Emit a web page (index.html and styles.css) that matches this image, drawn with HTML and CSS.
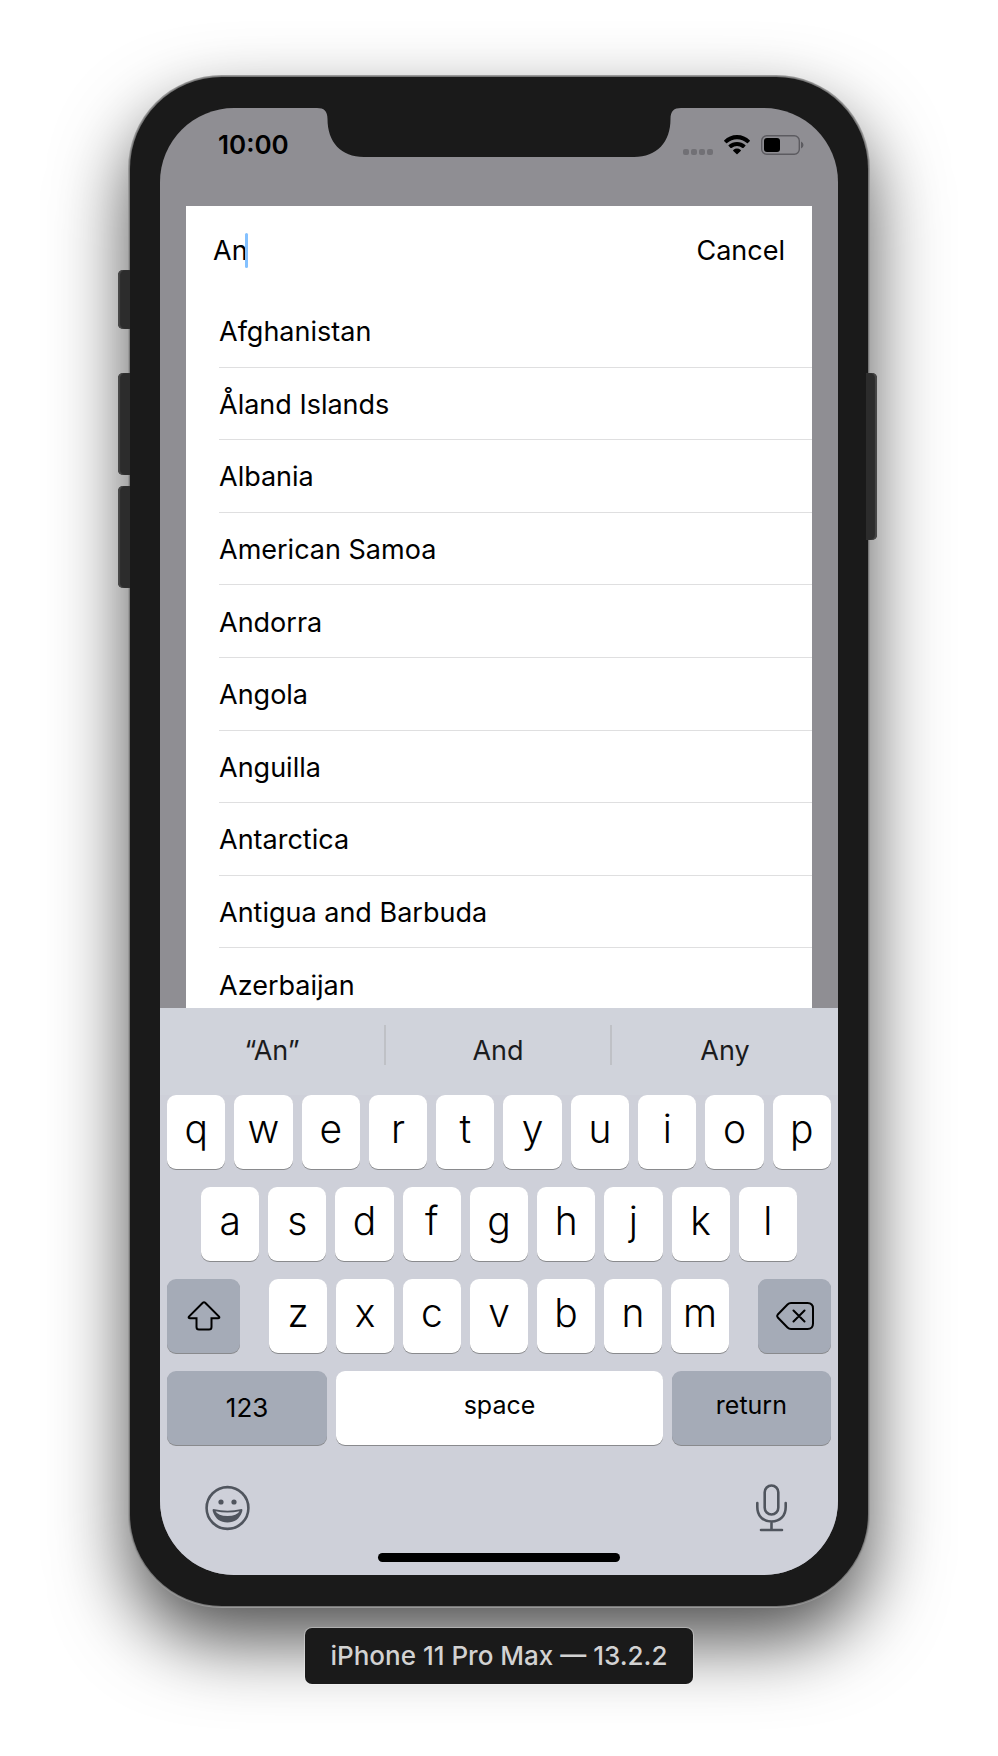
FILE: index.html
```html
<!DOCTYPE html>
<html lang="en">
<head>
<meta charset="utf-8">
<meta name="viewport" content="width=device-width, initial-scale=1">
<title>Country search</title>
<link rel="stylesheet" href="styles.css">
</head>
<body>
<main class="stage">
  <div class="phone">
    <span class="side mute"></span>
    <span class="side volume-up"></span>
    <span class="side volume-down"></span>
    <span class="side power"></span>
    <div class="screen">
      <svg class="notch" viewBox="0 0 364 49" aria-hidden="true"><path d="M0 0C7 0 10.500 3 10.500 11C10.500 34 24 49 47 49H317C340 49 353.500 34 353.500 11C353.500 3 357 0 364 0Z" fill="#1a1a1a"/></svg>
      <header class="status">
        <time class="clock">10:00</time>
        <div class="indicators">
          <svg width="30" height="20" viewBox="0 0 30 20" aria-hidden="true"><g fill="#717075"><rect y="14" width="6" height="6" rx="2"/><rect x="8" y="14" width="6" height="6" rx="2"/><rect x="16" y="14" width="6" height="6" rx="2"/><rect x="24" y="14" width="6" height="6" rx="2"/></g></svg>
          <svg width="26" height="20" viewBox="0 0 26 20" aria-hidden="true"><path d="M13 0C18 0 22.500 2 25.700 5.200Q26.200 5.700 25.700 6.200L23.900 8Q23.400 8.500 22.900 8Q18.700 4.200 13 4.200T3.100 8Q2.600 8.500 2.100 8L.3 6.200Q-.2 5.700.3 5.200C3.500 2 8 0 13 0ZM13 6.900Q17.800 6.900 21.300 10.100Q21.800 10.600 21.300 11.100L19.400 12.900Q18.900 13.300 18.400 12.900Q16 11 13 11T7.600 12.900Q7.100 13.300 6.600 12.900L4.700 11.100Q4.200 10.600 4.700 10.100Q8.200 6.900 13 6.900ZM13 13.500Q15 13.500 16.700 14.900Q17.200 15.400 16.700 15.900L13.500 19.100Q13 19.600 12.500 19.100L9.300 15.900Q8.800 15.400 9.300 14.900Q11 13.500 13 13.500Z"/></svg>
          <svg width="43" height="20" viewBox="0 0 43 20" aria-hidden="true"><rect x=".7" y=".7" width="37.600" height="18.600" rx="5" fill="none" stroke="#5c5b60" stroke-width="1.400"/><rect x="3" y="3" width="16" height="14" rx="3"/><path d="M40 6.500Q42.500 7.500 42.500 10T40 13.500Z" fill="#5c5b60"/></svg>
        </div>
      </header>
      <section class="sheet">
        <form class="search">
          <label class="field"><input class="query" type="text" value="An" size="2" aria-label="Search countries"><span class="caret"></span></label>
          <button class="cancel" type="button">Cancel</button>
        </form>
        <ul class="countries">
          <li>Afghanistan</li>
          <li>Åland Islands</li>
          <li>Albania</li>
          <li>American Samoa</li>
          <li>Andorra</li>
          <li>Angola</li>
          <li>Anguilla</li>
          <li>Antarctica</li>
          <li>Antigua and Barbuda</li>
          <li>Azerbaijan</li>
        </ul>
      </section>
      <section class="keyboard" aria-label="Keyboard">
        <div class="suggestions">
          <button type="button">“An”</button>
          <button type="button">And</button>
          <button type="button">Any</button>
        </div>
        <div class="keys">
          <div class="row">
            <button class="key" type="button">q</button><button class="key" type="button">w</button><button class="key" type="button">e</button><button class="key" type="button">r</button><button class="key" type="button">t</button><button class="key" type="button">y</button><button class="key" type="button">u</button><button class="key" type="button">i</button><button class="key" type="button">o</button><button class="key" type="button">p</button>
          </div>
          <div class="row inset">
            <button class="key" type="button">a</button><button class="key" type="button">s</button><button class="key" type="button">d</button><button class="key" type="button">f</button><button class="key" type="button">g</button><button class="key" type="button">h</button><button class="key" type="button">j</button><button class="key" type="button">k</button><button class="key" type="button">l</button>
          </div>
          <div class="row wide-gap">
            <button class="key dark edge" type="button" aria-label="Shift"><svg width="34" height="30" viewBox="0 0 34 30" aria-hidden="true"><path d="M15.800 1.800Q17 .7 18.200 1.800L32 15.500Q33 17.300 31 17.300H24.500V26Q24.500 28.500 22 28.500H12Q9.500 28.500 9.500 26V17.300H3Q1 17.300 2 15.500Z"/></svg></button>
            <div class="row letters">
              <button class="key" type="button">z</button><button class="key" type="button">x</button><button class="key" type="button">c</button><button class="key" type="button">v</button><button class="key" type="button">b</button><button class="key" type="button">n</button><button class="key" type="button">m</button>
            </div>
            <button class="key dark edge" type="button" aria-label="Delete"><svg width="38" height="28" viewBox="0 0 38 28" aria-hidden="true"><path d="M15 1H31.500Q37 1 37 6.500V21.500Q37 27 31.500 27H15Q13 27 11.500 25.500L1.800 15.500Q.6 14 1.800 12.500L11.500 2.500Q13 1 15 1ZM17.500 8.500L28.500 19.500M28.500 8.500L17.500 19.500"/></svg></button>
          </div>
          <div class="row bottom">
            <button class="key dark word number" type="button">123</button>
            <button class="key word" type="button">space</button>
            <button class="key dark word" type="button">return</button>
          </div>
        </div>
        <div class="tools">
          <button type="button" aria-label="Emoji"><svg width="45" height="46" viewBox="0 0 45 46" aria-hidden="true"><circle cx="22.500" cy="23" r="20.900" fill="none" stroke="#50555e" stroke-width="2.600"/><circle cx="16" cy="17" r="2.600"/><circle cx="29" cy="17" r="2.600"/><path d="M8.500 24Q22.500 27.500 36.500 24Q38 24 37 27C34.500 34 29.500 37.500 22.500 37.500S10.500 34 8 27Q7 24 8.500 24ZM10.500 26.200Q13 31 22.500 31T34.500 26.200Q22.500 29 10.500 26.200Z" fill-rule="evenodd"/></svg></button>
          <button type="button" aria-label="Dictate"><svg width="31" height="48" viewBox="0 0 31 48" aria-hidden="true"><g fill="none" stroke="#50555e" stroke-width="2.600" stroke-linecap="round"><rect x="8.700" y="1.500" width="13.600" height="29" rx="6.800"/><path d="M1.300 19V23C1.300 31.500 6.500 37.500 15.500 37.500S29.700 31.500 29.700 23V19M15.500 37.500V46M5 46H26"/></g></svg></button>
        </div>
        <div class="home"></div>
      </section>
    </div>
  </div>
  <p class="device">iPhone 11 Pro Max — 13.2.2</p>
</main>
</body>
</html>
```
FILE: styles.css
```css
* {
  box-sizing: border-box;
}

body {
  margin: 0;
  background: #fff;
  color: #000;
  font-family: Inter, "Liberation Sans", sans-serif;
}

button {
  border: 0;
  padding: 0;
  background: none;
  color: inherit;
  font: inherit;
}

.stage {
  display: flex;
  flex-direction: column;
  align-items: center;
  min-height: 100vh;
  padding: 77px 16px 72px;
  overflow: hidden;
}

.phone {
  position: relative;
  width: 100%;
  max-width: 738px;
  padding: 31px 30px;
  border-radius: 92px;
  background: #1a1a1a;
  box-shadow: 0 0 0 1px #777, 0 0 0 2px #999, 0 34px 76px rgba(0, 0, 0, 0.7);
}

.side {
  position: absolute;
  left: -12px;
  width: 12px;
  border-radius: 5px 0 0 5px;
  background: #2c2c2c;
  box-shadow: inset 2px 0 1px #484848;
}

.mute {
  top: 193px;
  height: 59px;
}

.volume-up {
  top: 296px;
  height: 102px;
}

.volume-down {
  top: 409px;
  height: 102px;
}

.power {
  top: 296px;
  right: -9px;
  left: auto;
  width: 11px;
  height: 167px;
  border-radius: 0 5px 5px 0;
  box-shadow: inset -2px 0 1px #484848;
}

.screen {
  position: relative;
  display: flex;
  flex-direction: column;
  border-radius: 74px;
  background: #8f8e93;
  overflow: hidden;
}

.notch {
  position: absolute;
  top: 0;
  left: 50%;
  width: 364px;
  transform: translateX(-50%);
}

.status {
  display: flex;
  justify-content: space-between;
  align-items: center;
  padding: 20px 34px 44px 58px;
}

.clock {
  font-size: 26px;
  font-weight: 600;
  line-height: 34px;
}

.indicators {
  display: flex;
  align-items: center;
  gap: 11px;
}

.sheet {
  height: 802px;
  margin: 0 26px;
  background: #fff;
  overflow: hidden;
}

.search {
  display: flex;
  justify-content: space-between;
  align-items: center;
  height: 89px;
  padding: 0 27px;
  font-size: 27px;
}

.field {
  display: flex;
  align-items: center;
}

.query {
  field-sizing: content;
  margin-right: -3px;
  padding: 0;
  border: 0;
  outline: 0;
  background: none;
  color: inherit;
  font: inherit;
}

.caret {
  width: 3px;
  height: 35px;
  border-radius: 2px;
  background: #84c1ff;
}

.countries {
  display: grid;
  grid-template-rows: repeat(10, 1fr);
  height: 726px;
  margin: 0;
  padding: 0 0 0 33px;
  list-style: none;
  font-size: 27px;
}

.countries li {
  display: flex;
  align-items: center;
  padding-top: 2px;
  border-bottom: 1px solid #dfdfe0;
}

.keyboard {
  padding: 0 7px 13px;
  background: #ced0d9;
}

.suggestions {
  display: grid;
  grid-template-columns: repeat(3, 1fr);
  margin: 0 -7px;
  padding: 17px 0 30px;
  background: #d0d3db;
  color: #1b1c1e;
  font-size: 27px;
}

.suggestions button {
  height: 40px;
  padding-top: 11px;
  line-height: 29px;
}

.suggestions button:not(:last-child) {
  border-right: 2px solid #bfc1c6;
}

.keys {
  display: flex;
  flex-direction: column;
  gap: 18px;
}

.row {
  display: flex;
  gap: 9px;
}

.inset {
  padding: 0 34px;
}

.wide-gap {
  gap: 29px;
}

.letters {
  flex: 1;
}

.key {
  display: flex;
  flex: 1 1 0;
  justify-content: center;
  align-items: center;
  min-width: 0;
  height: 74px;
  padding-bottom: 8px;
  border-radius: 9px;
  background: #fff;
  box-shadow: 0 1px 0 #898a8d;
  font-size: 39px;
  font-weight: 350;
}

.dark {
  background: #a5abb7;
}

.edge {
  flex: 0 0 73px;
  padding: 0;
}

.edge svg {
  fill: none;
  stroke: #000;
  stroke-width: 2;
  stroke-linecap: round;
}

.word {
  padding-bottom: 6px;
  font-size: 25px;
  font-weight: 400;
}

.number {
  padding-bottom: 2px;
  font-size: 26px;
}

.bottom {
  display: grid;
  grid-template-columns: 160fr 326fr 159fr;
}

.tools {
  display: flex;
  justify-content: space-between;
  align-items: center;
  padding: 39px 44px 21px 38px;
}

.tools button {
  display: flex;
}

.tools svg {
  fill: #50555e;
}

.home {
  width: 242px;
  height: 9px;
  margin: 0 auto;
  border-radius: 5px;
  background: #000;
}

.device {
  position: relative;
  margin: 22px 0 0;
  padding: 12px 26px;
  border-radius: 7px;
  background: #1a1a1a;
  box-shadow: 0 0 0 1px rgba(255, 255, 255, 0.3);
  color: #d2d2d2;
  font-size: 26px;
  font-weight: 500;
  line-height: 32px;
}
```
